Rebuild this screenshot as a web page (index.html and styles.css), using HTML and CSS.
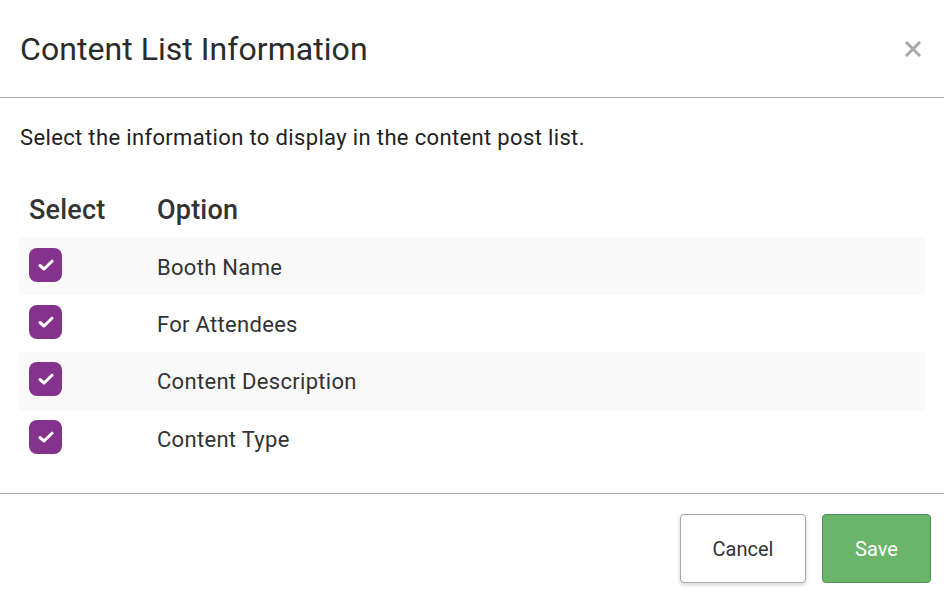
FILE: index.html
```html
<!DOCTYPE html>
<html lang="en">
<head>
<meta charset="utf-8">
<title>Content List Information</title>
<link rel="stylesheet" href="styles.css">
</head>
<body>
<div class="modal">
  <header class="modal-header">
    <h1 class="modal-title">Content List Information</h1>
    <button class="close" aria-label="Close">
      <svg width="16" height="16" viewBox="0 0 16 16"><path d="M2 2 L14 14 M14 2 L2 14" stroke="#a9a9a9" stroke-width="3" stroke-linecap="square" fill="none"/></svg>
    </button>
  </header>
  <section class="modal-body">
    <p class="intro">Select the information to display in the content post list.</p>
    <table class="options">
      <thead>
        <tr><th class="col-select">Select</th><th>Option</th></tr>
      </thead>
      <tbody>
        <tr class="striped"><td class="col-select"><span class="check"><svg width="16" height="12" viewBox="0 0 16 12"><path d="M2 6.5 L6 10 L14 2.2" stroke="#fff" stroke-width="3" fill="none" stroke-linecap="round" stroke-linejoin="round"/></svg></span></td><td>Booth Name</td></tr>
        <tr><td class="col-select"><span class="check"><svg width="16" height="12" viewBox="0 0 16 12"><path d="M2 6.5 L6 10 L14 2.2" stroke="#fff" stroke-width="3" fill="none" stroke-linecap="round" stroke-linejoin="round"/></svg></span></td><td>For Attendees</td></tr>
        <tr class="striped"><td class="col-select"><span class="check"><svg width="16" height="12" viewBox="0 0 16 12"><path d="M2 6.5 L6 10 L14 2.2" stroke="#fff" stroke-width="3" fill="none" stroke-linecap="round" stroke-linejoin="round"/></svg></span></td><td>Content Description</td></tr>
        <tr><td class="col-select"><span class="check"><svg width="16" height="12" viewBox="0 0 16 12"><path d="M2 6.5 L6 10 L14 2.2" stroke="#fff" stroke-width="3" fill="none" stroke-linecap="round" stroke-linejoin="round"/></svg></span></td><td>Content Type</td></tr>
      </tbody>
    </table>
  </section>
  <footer class="modal-footer">
    <button class="btn btn-cancel">Cancel</button>
    <button class="btn btn-save">Save</button>
  </footer>
</div>
</body>
</html>
```
FILE: styles.css
```css
* { box-sizing: border-box; }
html, body {
  margin: 0;
  padding: 0;
  background: #fff;
  font-family: Roboto, "Liberation Sans", Arial, sans-serif;
  color: #333;
}
.modal {
  width: 944px;
  height: 598px;
  background: #fff;
}
.modal-header {
  height: 98px;
  display: flex;
  align-items: center;
  justify-content: space-between;
  padding: 0 23px 0 20px;
  border-bottom: 1px solid #acacac;
}
.modal-title {
  margin: 0;
  font-size: 32px;
  line-height: 38px;
  font-weight: 400;
  letter-spacing: 0.05px;
  color: #2b2b2b;
}
.close {
  border: 0;
  background: none;
  padding: 0;
  width: 16px;
  height: 16px;
  display: flex;
  cursor: pointer;
}
.modal-body {
  padding: 26px 19px 26px 19px;
  border-bottom: 1px solid #acacac;
}
.intro {
  margin: 0 0 0 1px;
  font-size: 22px;
  line-height: 28px;
  letter-spacing: 0.35px;
  color: #222;
}
.options {
  width: 100%;
  border-collapse: collapse;
  margin-top: 33px;
}
.options th {
  text-align: left;
  font-size: 27px;
  letter-spacing: 0.2px;
  font-weight: 500;
  color: #333;
  height: 53px;
  padding: 0 0 3px 0;
  vertical-align: middle;
}
.options td {
  height: 57px;
  font-size: 22px;
  letter-spacing: 0.3px;
  color: #333;
  padding: 0;
  vertical-align: middle;
}
.options tbody tr:nth-child(3) td { height: 58px; }
.options tr.striped td { background: #f9f9f9; }
.options td:last-child { padding-top: 1px; }
.col-select {
  width: 138px;
  padding-left: 10px !important;
}
.check {
  display: flex;
  align-items: center;
  justify-content: center;
  width: 33px;
  height: 34px;
  border-radius: 8px;
  background: #84328b;
  margin-top: -4px;
}
.modal-footer {
  display: flex;
  justify-content: flex-end;
  gap: 16px;
  padding: 20px 13px 0 0;
}
.btn {
  height: 69px;
  font-family: Roboto, "Liberation Sans", Arial, sans-serif;
  font-size: 20px;
  border-radius: 4px;
  cursor: pointer;
}
.btn-cancel {
  width: 126px;
  background: #fff;
  color: #333;
  border: 1px solid #a8a8a8;
  box-shadow: 0 2px 4px rgba(0,0,0,0.18);
}
.btn-save {
  width: 109px;
  background: #6bb56b;
  color: #fff;
  border: 1px solid #4f8f4f;
}
```
